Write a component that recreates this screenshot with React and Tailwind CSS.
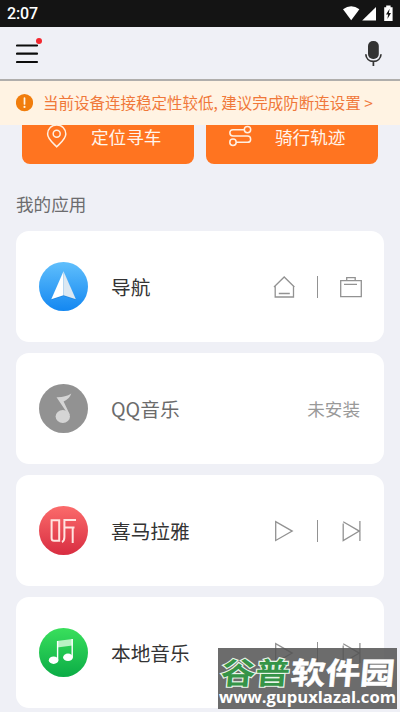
import React from "react";

const cjk = "font-['Noto_Sans_CJK_SC',sans-serif]";

function StatusBar() {
  return (
    <div className="flex h-[27px] shrink-0 items-center justify-between bg-[#141414] pl-[7px] pr-[6px]">
      <span className="font-['Roboto',sans-serif] text-[16px] font-medium leading-none tracking-[-0.1px] text-white">2:07</span>
      <svg width="53" height="18" viewBox="0 0 53 18" fill="#fff">
        <path d="M2 4.2Q10.2-1.8 18.4 4.2L10.2 15.2Z" />
        <path d="M35 2v13.6H21.200Z" />
        <path d="M43.200 2.200h2V.6h4.400v1.600h2v13.800h-8.400V2.200Z" />
        <path d="M48.600 3.800l-3.600 5.600h2.100L46.400 14l3.600-5.900h-2.100Z" fill="#141414" />
      </svg>
    </div>
  );
}

function Header() {
  return (
    <div className="flex h-[54px] shrink-0 items-center justify-between border-b-2 border-[#b0aeac] pl-4 pr-[18px]">
      <svg width="28" height="28" viewBox="0 0 28 28">
        <path d="M1 6.500h20M1 14.700h20M1 23h20" stroke="#0c0c0c" strokeWidth="2.200" strokeLinecap="round" />
      </svg>
      <svg width="18" height="27" viewBox="0 0 18 27" fill="none">
        <rect x="4" y="1" width="10.800" height="18" rx="5" fill="#333" />
        <path d="M1.800 14.200c.2 4.300 3.300 7.200 7.600 7.200s7.400-2.900 7.600-7.200M9.400 21.400v4.600" stroke="#333" strokeWidth="1.700" />
      </svg>
    </div>
  );
}

function Banner() {
  return (
    <div className="flex h-11 shrink-0 items-center bg-[#fff3e3] pl-4">
      <svg width="17" height="18" viewBox="0 0 17 18">
        <circle cx="8.500" cy="8.600" r="8.600" fill="#f17d0c" />
        <path d="M8.500 4v6" stroke="#fff3e3" strokeWidth="1.700" strokeLinecap="round" />
        <circle cx="8.500" cy="12.900" r="1.100" fill="#fff3e3" />
      </svg>
      <span className="ml-[10px] whitespace-nowrap text-[15.5px] leading-none text-[#f0783a]">当前设备连接稳定性较低, 建议完成防断连设置 &gt;</span>
    </div>
  );
}

function Shortcuts() {
  return (
    <div className="flex shrink-0 gap-3 pl-[22px]">
      <div className="flex h-[39px] w-[172px] items-start rounded-b-[8px] bg-[#ff7420] pl-6">
        <svg width="22" height="24" viewBox="0 0 22 24" fill="none" stroke="#fff0e2" strokeWidth="1.500">
          <path d="M10.700 21.800C7 18 1.600 14 1.600 9a9.100 9.100 0 0 1 18.200 0c0 5-5.400 9-9.100 12.800Z" />
          <circle cx="10.700" cy="8.800" r="3.500" />
        </svg>
        <span className="ml-[23px] mt-[3px] text-[17.6px] leading-[18px] text-[#fff5ec]">定位寻车</span>
      </div>
      <div className="flex h-[39px] w-[172px] items-start rounded-b-[8px] bg-[#ff7420] pl-[23px]">
        <svg width="24" height="24" viewBox="0 0 24 24" fill="none" stroke="#fff0e2" strokeWidth="1.500">
          <circle cx="18.500" cy="4.600" r="3.200" />
          <circle cx="4" cy="17.300" r="3.200" />
          <path d="M15.300 4.700H4a3.100 3.100 0 0 0 0 6.300h14.500a3.100 3.100 0 0 1 0 6.300H7.200" />
        </svg>
        <span className="ml-[22px] mt-[3px] text-[17.6px] leading-[18px] text-[#fff5ec]">骑行轨迹</span>
      </div>
    </div>
  );
}

function NavLogo() {
  return (
    <svg width="49" height="49" viewBox="0 0 49 49">
      <defs>
        <linearGradient id="blue" x1="0" y1="0" x2="0" y2="1">
          <stop stopColor="#60bffc" />
          <stop offset="1" stopColor="#1387f1" />
        </linearGradient>
      </defs>
      <circle cx="24.500" cy="24.500" r="24.500" fill="url(#blue)" />
      <path d="M24.500 10.500L12.500 38l12-4 12.500 4Z" fill="#126cc0" opacity=".4" />
      <path d="M24.500 9.200L12.300 37.200l12.200-4Z" fill="#fff" />
      <path d="M24.500 9.200L36.900 37.200l-12.400-4Z" fill="#dce8f2" />
    </svg>
  );
}

function QQLogo() {
  return (
    <svg width="49" height="49" viewBox="0 0 49 49">
      <circle cx="24.500" cy="24.500" r="24.500" fill="#929292" />
      <g fill="#d5d5d5">
        <ellipse cx="23.800" cy="32.500" rx="7.200" ry="6.500" />
        <path d="M17.500 13.200Q26 13.500 32.300 9.500 30.500 15 24.600 17.500L31 31l-2.500-1.500Z" />
      </g>
    </svg>
  );
}

function XimalayaLogo() {
  return (
    <svg width="49" height="49" viewBox="0 0 49 49">
      <defs>
        <linearGradient id="red" x1="0" y1="0" x2="0" y2="1">
          <stop stopColor="#fb6b6b" />
          <stop offset="1" stopColor="#d82d41" />
        </linearGradient>
      </defs>
      <circle cx="24.500" cy="24.500" r="24.500" fill="url(#red)" />
      <path d="M12.600 14.200h7.600v20.500h-5.100q-2.500 0-2.500-2.500ZM37 14H25.400V31q0 4-2.500 5M25.400 21.600H35.500M33.700 21.600V37" fill="none" stroke="#ffe4e0" strokeWidth="2" />
    </svg>
  );
}

function MusicLogo() {
  return (
    <svg width="49" height="49" viewBox="0 0 49 49">
      <defs>
        <linearGradient id="green" x1="0" y1="0" x2="0" y2="1">
          <stop stopColor="#39df5c" />
          <stop offset="1" stopColor="#0bac46" />
        </linearGradient>
      </defs>
      <circle cx="24.500" cy="24.500" r="24.500" fill="url(#green)" />
      <path d="M18 13l15.500-2v6.500L18 19.500Z" fill="#b9f2c5" />
      <path d="M18.600 13v19M33.200 11v18" stroke="#fff" strokeWidth="1.400" />
      <ellipse cx="14.600" cy="32.200" rx="4.800" ry="3.700" fill="#fff" />
      <ellipse cx="29" cy="29.300" rx="4.900" ry="3.700" fill="#fff" />
    </svg>
  );
}

const iconProps = { width: 24, height: 24, viewBox: "0 0 24 24", fill: "none", stroke: "#929292", strokeWidth: 1.3 };

function Divider() {
  return <span className="h-[22px] w-px bg-[#929292]" />;
}

function NavActions() {
  return (
    <div className="flex items-center">
      <svg {...iconProps}>
        <path d="M2 12L12.200 2 22.400 12M3.200 11v11h18.300V11M6.800 18.500h11" />
      </svg>
      <span className="ml-[21px] flex"><Divider /></span>
      <svg {...iconProps} className="ml-[21px]">
        <path d="M1.700 5.700h20.600v16H1.700ZM7.700 5.700v-3h8.500v3M5 9.300h13" />
      </svg>
    </div>
  );
}

function PlayActions() {
  return (
    <div className="flex items-center">
      <svg {...iconProps}>
        <path d="M3.700 2.700v18.800L20.200 12.100Z" />
      </svg>
      <span className="ml-[21px] flex"><Divider /></span>
      <svg {...iconProps} className="ml-[21px]">
        <path d="M4.200 4.500v17L20.300 12.100 4.200 2.700M20.900 2v20" />
      </svg>
    </div>
  );
}

function AppCard({ logo, name, muted, children }) {
  return (
    <div className="flex h-[111px] shrink-0 items-center rounded-[13px] bg-white pl-[23px] pr-[21px]">
      {logo}
      <span className={"ml-[23px] flex-1 text-[19.7px] leading-6 " + (muted ? "text-[#6b6b6b]" : "text-[#333]")}>{name}</span>
      {children}
    </div>
  );
}

function Watermark() {
  return (
    <div className="absolute left-[218px] top-[648px] flex h-[61px] w-[179px] flex-col bg-[#525252]/85">
      <svg width="179" height="61" viewBox="0 0 179 61">
        <g className="font-['Noto_Sans_CJK_SC',sans-serif] font-bold" fontSize="30" transform="translate(0 36) skewX(-5)">
          <text x="2" y="0" textLength="69" lengthAdjust="spacingAndGlyphs" fill="#359447" stroke="#e9f5e9" strokeWidth="2.200" paintOrder="stroke">谷普</text>
          <text x="72" y="0" textLength="104" lengthAdjust="spacingAndGlyphs" fill="#fff" stroke="#fff" strokeWidth=".5">软件园</text>
        </g>
        <text x="1" y="55" textLength="177" lengthAdjust="spacingAndGlyphs" className="font-['Open_Sans',sans-serif] font-bold" fontSize="16" fill="#fff">www.gupuxlazal.com</text>
      </svg>
    </div>
  );
}

export default function App() {
  return (
    <div className={"relative flex h-[712px] w-[400px] flex-col overflow-hidden bg-[#eff0f6] " + cjk}>
      <StatusBar />
      <Header />
      <span className="absolute left-[36px] top-[38px] size-[6px] rounded-full bg-[#f3272f]" />
      <Banner />
      <Shortcuts />
      <h2 className="ml-4 mt-[30px] h-[37px] shrink-0 text-[17.6px] leading-5 text-[#6c6c6e]">我的应用</h2>
      <div className="flex flex-col gap-[11.15px] px-4">
        <AppCard logo={<NavLogo />} name="导航"><NavActions /></AppCard>
        <AppCard logo={<QQLogo />} name="QQ音乐" muted>
          <span className="mr-[3px] text-[17.6px] leading-5 text-[#999]">未安装</span>
        </AppCard>
        <AppCard logo={<XimalayaLogo />} name="喜马拉雅"><PlayActions /></AppCard>
        <AppCard logo={<MusicLogo />} name="本地音乐"><PlayActions /></AppCard>
      </div>
      <Watermark />
    </div>
  );
}
